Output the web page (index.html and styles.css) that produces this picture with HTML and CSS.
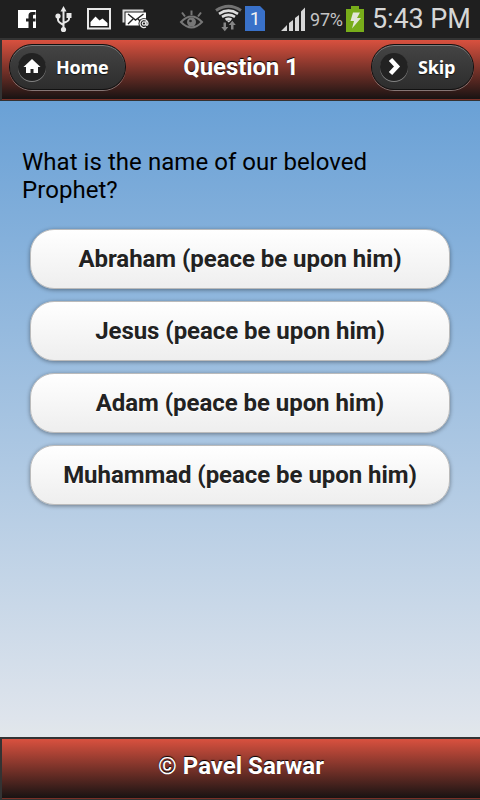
FILE: index.html
```html
<!DOCTYPE html>
<html lang="en">
<head>
    <meta charset="UTF-8">
    <meta name="viewport" content="width=device-width, initial-scale=1.0">
    <title>Question 1</title>
    <link rel="stylesheet" href="styles.css">
</head>
<body>
    <!-- Status bar -->
    <div class="status-bar">
        <svg class="status-icons" width="310" height="38" viewBox="0 0 310 38">
            <!-- facebook -->
            <path d="M18 10h18v18h-3v-6.500h2.500v-3H33V16q0-1.200 1-1.200h1.500V12H32q-3.500 0-3.500 3.500v3H26v3h2.500V28H18z" fill="#fff"/>
            <!-- usb -->
            <g fill="none" stroke="#e8e8e8" stroke-width="2">
                <path d="M63.500 9v20M58 16v4q0 2 5.500 5M69 15v4q0 2-5.500 4"/>
            </g>
            <path d="M63.500 6l3 5.500h-6zM66.500 13h5v5h-5z" fill="#e8e8e8"/>
            <circle cx="58" cy="16" r="2.600" fill="#e8e8e8"/>
            <circle cx="63.500" cy="29.500" r="2.600" fill="#e8e8e8"/>
            <!-- picture -->
            <rect x="88" y="9" width="22" height="19.500" fill="none" stroke="#e8e8e8" stroke-width="2"/>
            <path d="M90.500 26v-4l5-5.500 4 4 3-2 5 4.500v3z" fill="#fff"/>
            <!-- mail -->
            <path d="M123.500 22.500v-12h20" fill="none" stroke="#ddd" stroke-width="2"/>
            <path d="M125.500 12.500H146v13h-20.500z" fill="#fff"/>
            <path d="M128 14l7.500 6 8-6M128 24l5-5M138 19l3 3" fill="none" stroke="#222" stroke-width="1.400"/>
            <circle cx="144" cy="23.500" r="5.500" fill="#1f1f1f"/>
            <path d="M146 21v4q2 1 2-2a4 4 0 1 0-2 4" fill="none" stroke="#e8e8e8" stroke-width="1.300"/>
            <circle cx="144" cy="23.500" r="1.700" fill="none" stroke="#e8e8e8" stroke-width="1.200"/>
            <!-- eye -->
            <g fill="none" stroke="#777" stroke-width="2">
                <path d="M181 22q10.500-11 21 0-10.500 11-21 0zM191.500 10.500v4.500M182 12.500l3 4M201 12.500l-3 4"/>
            </g>
            <circle cx="191.500" cy="22" r="4.500" fill="#777"/>
            <circle cx="190.500" cy="21" r="1.300" fill="#222"/>
            <!-- wifi -->
            <g fill="none" stroke="#ddd" stroke-width="2.600">
                <path d="M216 10.500q12.500-8.500 25 0" stroke="#737373" stroke-width="3"/>
                <path d="M219 13.800q9.500-6.300 19 0M222 16.900q6.500-4 13 0M225.500 19.700q3-1.700 6 0"/>
            </g>
            <path d="M226.500 20.500h4.500l-2.300 2z" fill="#ddd"/>
            <path d="M223.500 22.500h2.500v4.500h2.300l-3.500 4.300-3.500-4.300h2.200zM231 29.500h2.500V25h2.300l-3.500-4.300-3.500 4.300h2.200z" fill="#858585"/>
            <!-- sim -->
            <path d="M245 6h15l5 5v20h-20z" fill="#3971c9"/>
            <text class="sim-number" x="255" y="25" text-anchor="middle">1</text>
            <!-- signal -->
            <path d="M281 31l6-6v6zM289 23l4-3v11h-4zM295 18l4-3v16h-4zM301 11.500l4-4V31h-4z" fill="#d6d6d6"/>
        </svg>
        <span class="battery-level">97%</span>
        <svg class="battery" width="18" height="38" viewBox="0 0 18 38">
            <path d="M5 6h8v3h5v23H0V9h5z" fill="#78ad1a"/>
            <path d="M7 12.500h7l-3 5.500h4l-9 10.500 2-7.500H4.500z" fill="#e3e6d8"/>
        </svg>
        <span class="clock">5:43 PM</span>
    </div>

    <div class="bar header">
        <a class="bar-btn home" href="#">
            <span class="icon">
                <svg width="28" height="28" viewBox="0 0 28 28"><path d="M14 6l8.500 8h-2.500v6h-4.500v-4h-3v4H8v-6H5.500z" fill="#fff"/></svg>
            </span>
            Home
        </a>
        <h1>Question 1</h1>
        <a class="bar-btn skip" href="#">
            <span class="icon">
                <svg width="28" height="28" viewBox="0 0 28 28"><path d="M10.500 6.500l6.500 7-6.500 7" fill="none" stroke="#fff" stroke-width="4.500"/></svg>
            </span>
            Skip
        </a>
    </div>

    <div class="content">
        <p class="question">What is the name of our beloved Prophet?</p>
        <button class="answer">Abraham (peace be upon him)</button>
        <button class="answer">Jesus (peace be upon him)</button>
        <button class="answer">Adam (peace be upon him)</button>
        <button class="answer">Muhammad (peace be upon him)</button>
    </div>

    <div class="bar footer">
        <h2>© Pavel Sarwar</h2>
    </div>
</body>
</html>
```
FILE: styles.css
```css
* {
    box-sizing: border-box;
}

body {
    display: flex;
    flex-direction: column;
    height: 100vh;
    margin: 0;
    overflow: hidden;
    font-family: Roboto, sans-serif;
}

/* Status bar */
.status-bar {
    display: flex;
    height: 38px;
    background-color: #1f1f1f;
    color: #d6d6d6;
    line-height: 38px;
    white-space: nowrap;
}

.status-icons,
.battery {
    display: block;
    flex: none;
}

.sim-number {
    fill: #f2f2f2;
    font-size: 19px;
}

.battery-level {
    width: 36px;
    font-size: 18px;
    line-height: 40px;
    color: #c4c4c4;
    letter-spacing: -0.2px;
}

.clock {
    margin-left: 8px;
    font-size: 27px;
    letter-spacing: -0.1px;
}

/* Header and footer */
.bar {
    display: flex;
    align-items: center;
    flex: none;
    height: 63px;
    padding-bottom: 6px;
    border: 2px solid #333;
    border-right: 0;
    border-bottom-width: 1px;
    background: linear-gradient(#d9513f, #151212);
    box-shadow: inset 0 -1px #7a3027;
    color: #fff;
}

.bar h1,
.bar h2 {
    flex: 1;
    margin: 0;
    font-size: 24px;
    line-height: 28px;
    text-align: center;
    text-shadow: 0 -1px 1px #000;
}

.bar h1 {
    padding-right: 15px;
    letter-spacing: -0.1px;
}

.header {
    justify-content: space-between;
    padding: 0 6px 6px 7px;
}

.bar-btn {
    display: flex;
    align-items: center;
    height: 46px;
    padding-left: 8px;
    border: 1px solid #111;
    border-radius: 23px;
    background: linear-gradient(#444, #2d2d2d);
    box-shadow: 0 1px 0 rgba(255,255,255,0.4), inset 0 1px 0 rgba(255,255,255,0.3);
    color: #fff;
    font-family: "Open Sans", sans-serif;
    font-size: 18px;
    font-weight: bold;
    letter-spacing: -0.2px;
    text-decoration: none;
    text-shadow: 0 1px 1px #111;
}

.home {
    width: 117px;
}

.skip {
    width: 103px;
}

.icon {
    width: 28px;
    height: 28px;
    margin-right: 10px;
    border-radius: 50%;
    background-color: #222;
    box-shadow: 0 1px 0 rgba(255,255,255,0.4);
}

.icon svg {
    display: block;
}

/* Question and answers */
.content {
    flex: 1;
    padding: 47px 30px 0;
    background: linear-gradient(#6aa1d6, #dee4ec 97%, #e2e7ea);
}

.question {
    margin: 0 -8px 25px;
    color: #000;
    font-size: 24px;
    line-height: 28px;
    letter-spacing: 0.05px;
}

.answer {
    display: block;
    width: 100%;
    height: 60px;
    margin-bottom: 12px;
    border: 1px solid #bbb;
    border-radius: 24px;
    background: linear-gradient(#fff, #eee);
    box-shadow: 0 1px 4px rgba(0,0,0,0.4);
    color: #222;
    font-family: Roboto, sans-serif;
    font-size: 24px;
    font-weight: bold;
    letter-spacing: -0.05px;
    text-shadow: 0 1px 0 #fff;
}
```
